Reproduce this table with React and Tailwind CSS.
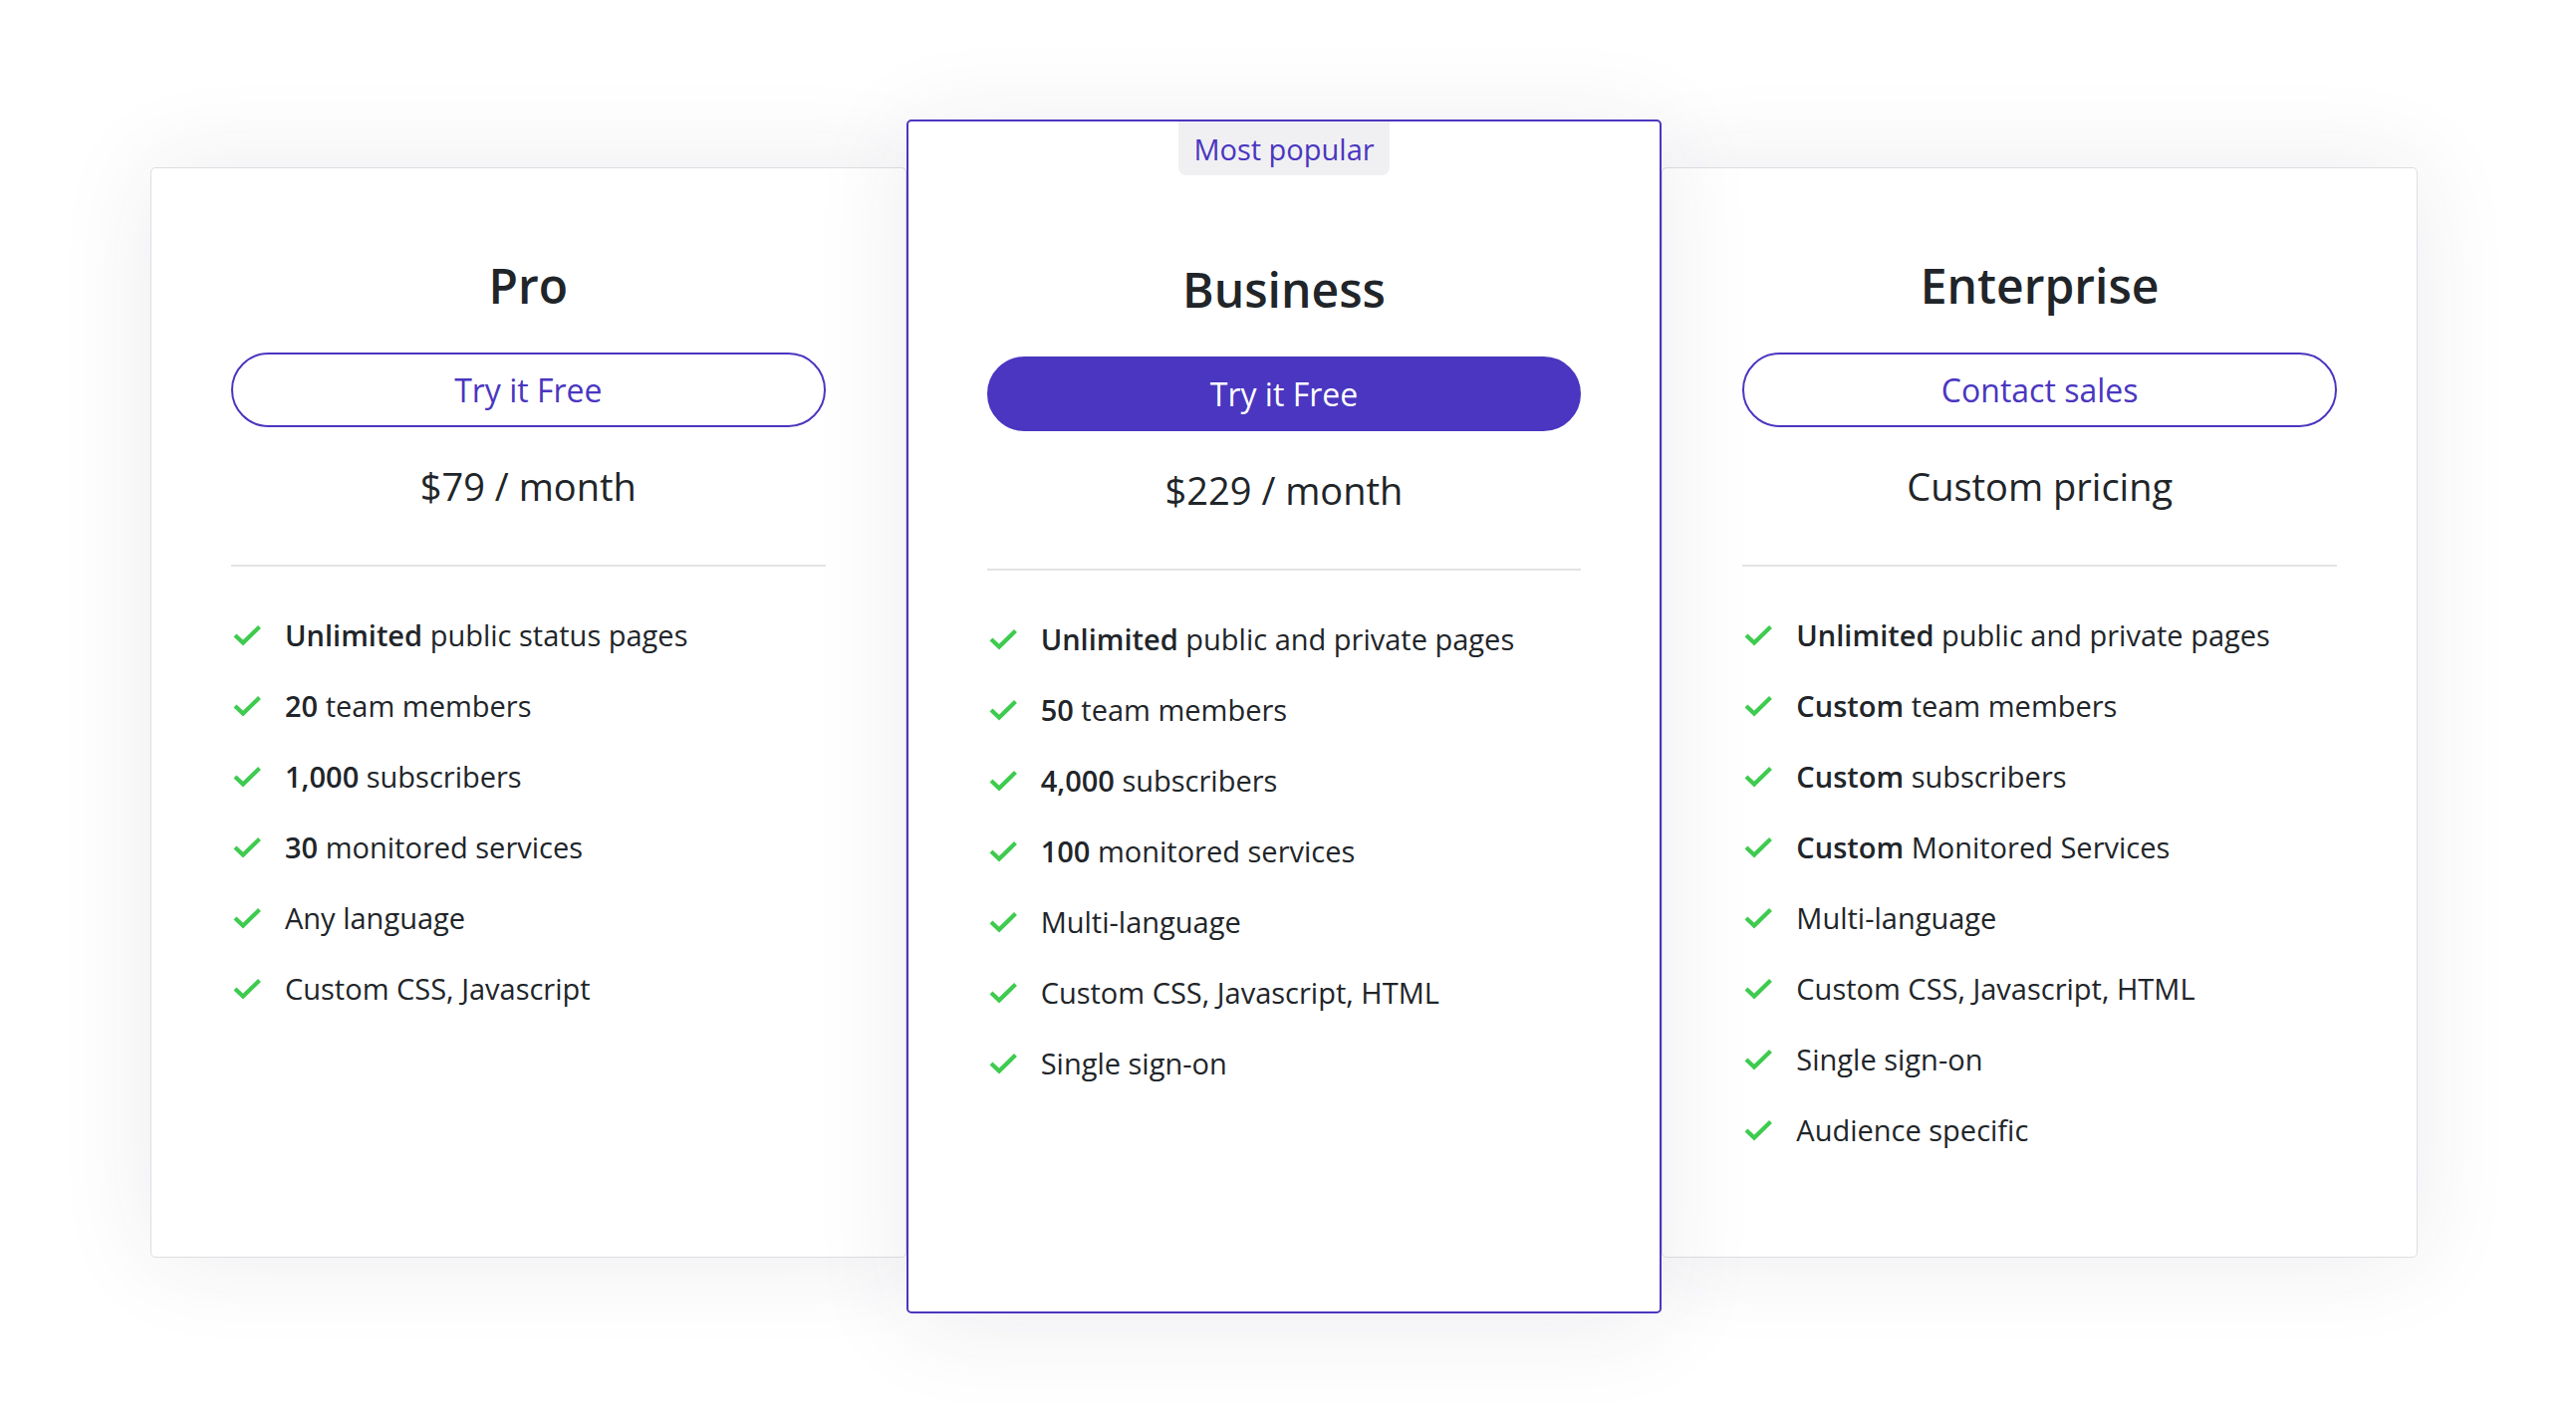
import React from 'react';

const plans = [
  {
    name: 'Pro',
    cta: 'Try it Free',
    price: '$79 / month',
    features: [
      ['Unlimited', ' public status pages'],
      ['20', ' team members'],
      ['1,000', ' subscribers'],
      ['30', ' monitored services'],
      ['', 'Any language'],
      ['', 'Custom CSS, Javascript'],
    ],
  },
  {
    name: 'Business',
    cta: 'Try it Free',
    price: '$229 / month',
    popular: true,
    features: [
      ['Unlimited', ' public and private pages'],
      ['50', ' team members'],
      ['4,000', ' subscribers'],
      ['100', ' monitored services'],
      ['', 'Multi-language'],
      ['', 'Custom CSS, Javascript, HTML'],
      ['', 'Single sign-on'],
    ],
  },
  {
    name: 'Enterprise',
    cta: 'Contact sales',
    price: 'Custom pricing',
    features: [
      ['Unlimited', ' public and private pages'],
      ['Custom', ' team members'],
      ['Custom', ' subscribers'],
      ['Custom', ' Monitored Services'],
      ['', 'Multi-language'],
      ['', 'Custom CSS, Javascript, HTML'],
      ['', 'Single sign-on'],
      ['', 'Audience specific'],
    ],
  },
];

const Check = () => (
  <svg width="30" height="22" viewBox="0 0 30 22" className="shrink-0 ml-[2px]">
    <path d="M2 11 L10 18.5 L26.5 2.5" fill="none" stroke="#3ecb4f" strokeWidth="4.2" strokeLinejoin="miter" />
  </svg>
);

const PlanCard = ({ plan }) => {
  const { popular } = plan;
  return (
    <div
      className={
        popular
          ? 'relative z-10 h-[1199px] bg-white border-2 border-[#4a36c0] rounded-[5px] px-[79px] shadow-[0_10px_100px_rgba(40,40,80,0.09)] flex flex-col'
          : 'relative mt-[48px] h-[1095px] bg-white border border-[#dedee2] rounded-[5px] px-[80px] pt-[94px] shadow-[0_0_100px_rgba(40,40,80,0.09)] flex flex-col'
      }
    >
      {popular && (
        <div className="self-center h-[54px] px-[15px] bg-[#f0f0f3] rounded-b-[8px] flex items-center text-[29px] leading-none text-[#4a36c0] mb-[91px]">
          Most popular
        </div>
      )}
      <h2 className="text-center text-[48px] leading-none font-semibold text-[#212529]">{plan.name}</h2>
      <button
        className={
          popular
            ? 'mt-[43px] h-[75px] w-full rounded-full bg-[#4a36c0] border-2 border-[#4a36c0] text-white text-[32px] leading-none flex items-center justify-center'
            : 'mt-[43px] h-[75px] w-full rounded-full bg-white border-2 border-[#4a36c0] text-[#4a36c0] text-[32px] leading-none flex items-center justify-center'
        }
      >
        {plan.cta}
      </button>
      <div className="mt-[40px] text-center text-[38px] leading-none text-[#212529]">{plan.price}</div>
      <div className="mt-[60px] h-[2px] bg-[#e3e3e5]" />
      <ul className="mt-[54px] flex flex-col gap-[42px]">
        {plan.features.map(([bold, rest], i) => (
          <li key={i} className="flex items-center gap-[22px] text-[29px] leading-none text-[#212529]">
            <Check />
            <span>
              {bold && <span className="font-semibold">{bold}</span>}
              {rest}
            </span>
          </li>
        ))}
      </ul>
    </div>
  );
};

export default function App() {
  return (
    <div className="min-h-[1426px] w-full bg-white font-['Open_Sans',sans-serif]">
      <div className="pt-[120px] pl-[151px]">
        <div className="w-[2276px] grid grid-cols-3 items-start">
          {plans.map((p) => (
            <PlanCard key={p.name} plan={p} />
          ))}
        </div>
      </div>
    </div>
  );
}
